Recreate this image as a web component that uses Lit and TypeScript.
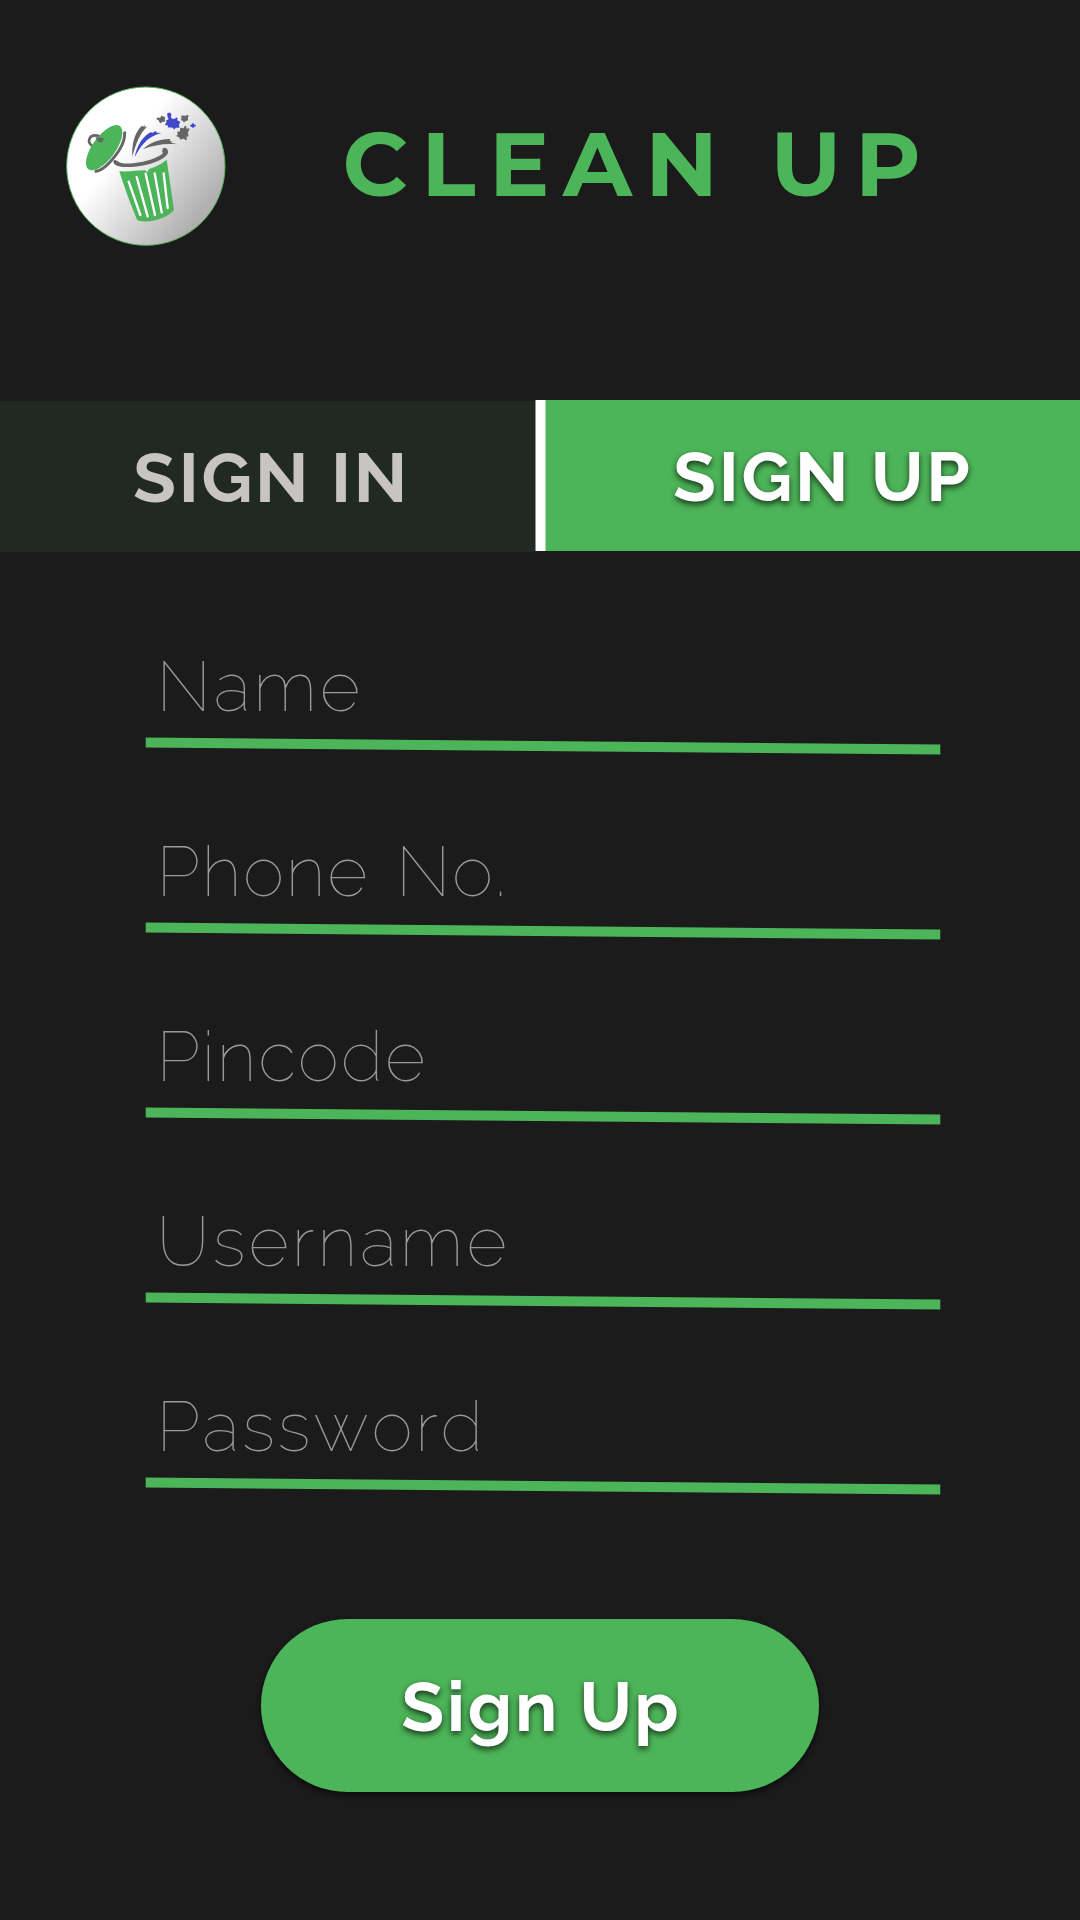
import { LitElement, html, css } from "lit";
import { customElement } from "lit/decorators.js";
import { styleMap } from "lit/directives/style-map.js";

@customElement("brand-logo")
export class BrandLogo extends LitElement {
  static styles = css`
    :host { display: block; width: 160px; height: 160px; }
    svg { display: block; width: 100%; height: 100%; }
  `;
  render() {
    return html`
      <svg viewBox="30 30 480 480" aria-hidden="true">
        <defs>
          <linearGradient id="disc" x1="0.2" y1="0.2" x2="0.88" y2="0.76">
            <stop offset="0.28" stop-color="#ffffff" />
            <stop offset="1" stop-color="#b0b0b0" />
          </linearGradient>
        </defs>
        <circle cx="269.5" cy="270.5" r="237.5" fill="url(#disc)" stroke="#4db559" stroke-width="3" />
        <g fill="none" stroke="#666" stroke-linecap="round">
          <path d="M206 170C207 200 184 235 160 260C146 275 133 283 120 286" stroke-width="9" />
          <path d="M107 208C93 199 99 178 117 178C127 178 134 183 136 190" stroke-width="8" />
        </g>
        <ellipse cx="144.5" cy="215" rx="80" ry="34.5" transform="rotate(-54 144.5 215)" fill="#4db559" />
        <path d="M118 184L144 186L138 200L128 198L122 191Z" fill="#666" />
        <path d="M172 254C177 249 184 254 188 258C201 264 222 264 252 259C284 253 311 242 321 232C317 225 318 217 325 215C333 215 338 224 336 231C330 246 303 259 272 266C241 273 199 276 183 269C175 266 171 260 172 254Z" fill="#666" />
        <path d="M229 242C227 209 233 173 257 149L261 152L266 146L266 154L274 151C251 174 240 202 229 242Z" fill="#666" />
        <path d="M236 243C242 210 262 178 286 168L288 171L300 165L302 170L316 171C282 180 259 199 236 243Z" fill="#4048cc" />
        <path d="M260 220C284 198 314 188 343 189L341 194L349 197L345 200L365 205C329 201 293 207 260 220Z" fill="#666" />
        <path d="M190 286C218 288 244 283 268 283L274 289L279 279C300 272 319 263 332 251L354 403C331 428 281 444 244 433C224 386 204 330 190 286Z" fill="#4db559" />
        <g stroke="#fff" stroke-width="7" stroke-linecap="round">
          <path d="M218 317L253 417" />
          <path d="M242 303L275 421" />
          <path d="M269 293L297 417" />
          <path d="M296 292L317 409" />
          <path d="M323 292L335 396" />
        </g>
        <g stroke-width="5" stroke-linejoin="round">
          <path d="M304 128L315 127L317 122L325 125L324 131L325 135L318 135L313 139L311 133Z" fill="#666" stroke="#666" />
          <path d="M378 121L386 122L395 119L393 127L394 131L389 132L384 136L382 132L377 131L380 126Z" fill="#666" stroke="#666" />
          <path d="M375 158L384 160L388 152L389 159L398 160L393 168L395 179L389 181L390 190L382 185L374 188L371 181L364 179L370 175L366 170L374 168Z" fill="#666" stroke="#666" />
          <path d="M336 114L341 112L344 117L341 122L345 129L355 132L362 127L361 134L370 139L366 145L368 153L359 152L355 157L349 151L338 152L338 146L330 145L334 140L333 135L341 130L337 122Z" fill="#4048cc" stroke="#4048cc" />
          <path d="M405 149L409 147L411 144L413 148L417 149L413 150L412 153L408 151Z" fill="#4048cc" stroke="#4048cc" />
        </g>
      </svg>
    `;
  }
}

interface Field {
  name: string;
  tracking: number;
  wordGap: number;
}

@customElement("app-root")
export class AppRoot extends LitElement {
  static styles = css`
    :host {
      display: block;
      box-sizing: border-box;
      width: 1080px;
      height: 1920px;
      overflow: hidden;
      background: #1b1b1b;
      font-family: Raleway, Lato, "Liberation Sans", sans-serif;
      font-size: 70px;
      line-height: 84px;
      letter-spacing: 2.8px;
      white-space: nowrap;
    }
    .header { display: flex; box-sizing: border-box; height: 400px; padding: 86px 0 0 66px; }
    .title {
      margin: 28px 0 0 116.5px;
      font: 700 90px/100px Montserrat, Lato, "Liberation Sans", sans-serif;
      letter-spacing: 13.5px;
      color: #4db559;
    }
    .tabs { display: flex; height: 152px; }
    .tab { box-sizing: border-box; height: 151px; padding-top: 34px; font-weight: 700; }
    .signin { width: 535px; margin-top: 1px; padding-left: 133px; background: #202922; color: #c7c4c2; }
    .divider {
      width: 11px;
      height: 151px;
      background: linear-gradient(90deg, #8f9491 1px, #fff 1px, #fff 10px, #a6daac 10px);
    }
    .signup { flex: 1; padding-left: 127px; background: #4db559; color: #fff; }
    .signup, .submit { text-shadow: 0 3px 6px rgba(0, 0, 0, 0.7); }
    .form { display: flex; flex-direction: column; padding: 92px 0 0 145px; }
    .field { display: flex; flex-direction: column; gap: 9px; height: 185px; }
    .label { padding-left: 11.5px; font-weight: 100; font-kerning: none; color: #999; }
    .rule { display: block; width: 796px; height: 18px; }
    .submit {
      display: flex;
      justify-content: center;
      box-sizing: border-box;
      width: 558px;
      height: 173px;
      margin: 50px 0 0 261px;
      padding: 45px 0 0 2.8px;
      border-radius: 86.5px;
      background: #4db559;
      color: #fff;
      font-weight: 700;
      box-shadow: 0 3px 6px rgba(0, 0, 0, 0.6);
    }
  `;

  private fields: Field[] = [
    { name: "Name", tracking: 2.9, wordGap: 0 },
    { name: "Phone No.", tracking: 1.8, wordGap: 6.6 },
    { name: "Pincode", tracking: 1.9, wordGap: 0 },
    { name: "Username", tracking: 3.05, wordGap: 0 },
    { name: "Password", tracking: 2.7, wordGap: 0 },
  ];

  private renderField(f: Field) {
    const spacing = { letterSpacing: `${f.tracking}px`, wordSpacing: `${f.wordGap}px` };
    return html`
      <div class="field">
        <div class="label" style=${styleMap(spacing)}>${f.name}</div>
        <svg class="rule" viewBox="0 0 796 18" aria-hidden="true">
          <path d="M0.7 0.5L795.3 7.5V17.5L0.7 10.5Z" fill="#4db559" />
        </svg>
      </div>
    `;
  }

  render() {
    return html`
      <header class="header">
        <brand-logo></brand-logo>
        <div class="title">CLEAN UP</div>
      </header>
      <nav class="tabs">
        <div class="tab signin">SIGN IN</div>
        <div class="divider"></div>
        <div class="tab signup">SIGN UP</div>
      </nav>
      <main class="form">${this.fields.map((f) => this.renderField(f))}</main>
      <div class="submit">Sign Up</div>
    `;
  }
}
